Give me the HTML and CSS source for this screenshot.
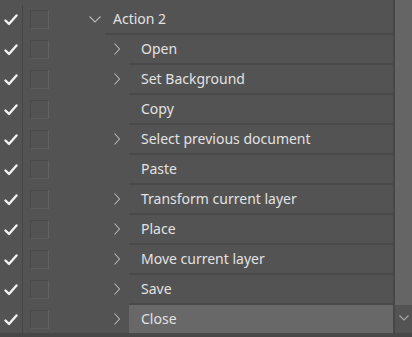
FILE: index.html
```html
<!DOCTYPE html>
<html lang="en">
<head>
  <meta charset="UTF-8">
  <meta name="viewport" content="width=device-width, initial-scale=1.0">
  <title>Actions</title>
  <link rel="stylesheet" href="styles.css">
</head>
<body>
  <div class="panel">
    <div class="list">

      <div class="row">
        <div class="check"><svg viewBox="0 0 14 12" width="14" height="12"><polyline points="1.5,6.5 5,10 12.5,1.5" /></svg></div>
        <div class="vis"><span class="box"></span></div>
        <div class="item action">
          <span class="twisty"><svg viewBox="0 0 12 7" width="12" height="7"><polyline points="0.5,0.5 6,6 11.5,0.5" /></svg></span>
          <span class="label">Action 2</span>
        </div>
      </div>

      <div class="row">
        <div class="check"><svg viewBox="0 0 14 12" width="14" height="12"><polyline points="1.5,6.5 5,10 12.5,1.5" /></svg></div>
        <div class="vis"><span class="box"></span></div>
        <div class="item step">
          <span class="twisty"><svg viewBox="0 0 6 12" width="6" height="12"><polyline points="0.5,0.5 5.5,6 0.5,11.5" /></svg></span>
          <span class="label">Open</span>
        </div>
      </div>

      <div class="row">
        <div class="check"><svg viewBox="0 0 14 12" width="14" height="12"><polyline points="1.5,6.5 5,10 12.5,1.5" /></svg></div>
        <div class="vis"><span class="box"></span></div>
        <div class="item step">
          <span class="twisty"><svg viewBox="0 0 6 12" width="6" height="12"><polyline points="0.5,0.5 5.5,6 0.5,11.5" /></svg></span>
          <span class="label">Set Background</span>
        </div>
      </div>

      <div class="row">
        <div class="check"><svg viewBox="0 0 14 12" width="14" height="12"><polyline points="1.5,6.5 5,10 12.5,1.5" /></svg></div>
        <div class="vis"><span class="box"></span></div>
        <div class="item step">
          <span class="twisty"></span>
          <span class="label">Copy</span>
        </div>
      </div>

      <div class="row">
        <div class="check"><svg viewBox="0 0 14 12" width="14" height="12"><polyline points="1.5,6.5 5,10 12.5,1.5" /></svg></div>
        <div class="vis"><span class="box"></span></div>
        <div class="item step">
          <span class="twisty"><svg viewBox="0 0 6 12" width="6" height="12"><polyline points="0.5,0.5 5.5,6 0.5,11.5" /></svg></span>
          <span class="label">Select previous document</span>
        </div>
      </div>

      <div class="row">
        <div class="check"><svg viewBox="0 0 14 12" width="14" height="12"><polyline points="1.5,6.5 5,10 12.5,1.5" /></svg></div>
        <div class="vis"><span class="box"></span></div>
        <div class="item step">
          <span class="twisty"></span>
          <span class="label">Paste</span>
        </div>
      </div>

      <div class="row">
        <div class="check"><svg viewBox="0 0 14 12" width="14" height="12"><polyline points="1.5,6.5 5,10 12.5,1.5" /></svg></div>
        <div class="vis"><span class="box"></span></div>
        <div class="item step">
          <span class="twisty"><svg viewBox="0 0 6 12" width="6" height="12"><polyline points="0.5,0.5 5.5,6 0.5,11.5" /></svg></span>
          <span class="label">Transform current layer</span>
        </div>
      </div>

      <div class="row">
        <div class="check"><svg viewBox="0 0 14 12" width="14" height="12"><polyline points="1.5,6.5 5,10 12.5,1.5" /></svg></div>
        <div class="vis"><span class="box"></span></div>
        <div class="item step">
          <span class="twisty"><svg viewBox="0 0 6 12" width="6" height="12"><polyline points="0.5,0.5 5.5,6 0.5,11.5" /></svg></span>
          <span class="label">Place</span>
        </div>
      </div>

      <div class="row">
        <div class="check"><svg viewBox="0 0 14 12" width="14" height="12"><polyline points="1.5,6.5 5,10 12.5,1.5" /></svg></div>
        <div class="vis"><span class="box"></span></div>
        <div class="item step">
          <span class="twisty"><svg viewBox="0 0 6 12" width="6" height="12"><polyline points="0.5,0.5 5.5,6 0.5,11.5" /></svg></span>
          <span class="label">Move current layer</span>
        </div>
      </div>

      <div class="row">
        <div class="check"><svg viewBox="0 0 14 12" width="14" height="12"><polyline points="1.5,6.5 5,10 12.5,1.5" /></svg></div>
        <div class="vis"><span class="box"></span></div>
        <div class="item step">
          <span class="twisty"><svg viewBox="0 0 6 12" width="6" height="12"><polyline points="0.5,0.5 5.5,6 0.5,11.5" /></svg></span>
          <span class="label">Save</span>
        </div>
      </div>

      <div class="row">
        <div class="check"><svg viewBox="0 0 14 12" width="14" height="12"><polyline points="1.5,6.5 5,10 12.5,1.5" /></svg></div>
        <div class="vis"><span class="box"></span></div>
        <div class="item step selected">
          <span class="twisty"><svg viewBox="0 0 6 12" width="6" height="12"><polyline points="0.5,0.5 5.5,6 0.5,11.5" /></svg></span>
          <span class="label">Close</span>
        </div>
      </div>

    </div>

    <div class="scrollbar">
      <div class="thumb"></div>
      <div class="arrow"><svg viewBox="0 0 10 6" width="10" height="6"><polyline points="0.5,0.5 5,5 9.5,0.5" /></svg></div>
    </div>
  </div>
</body>
</html>
```
FILE: styles.css
```css
body {
  margin: 0;
  background-color: #535353;
  font-family: "Noto Sans", "Open Sans", Arial, sans-serif;
  font-size: 14px;
  color: #e2e2e2;
  overflow: hidden;
}

.panel {
  display: flex;
  height: 337px;
  border-bottom: 4px solid #474747;
  box-sizing: border-box;
}

.list {
  flex: 1;
  padding-top: 5px;
}

.row {
  display: flex;
  height: 30px;
}

.check {
  width: 22px;
  border-right: 1px solid #464646;
  display: flex;
  align-items: center;
  justify-content: center;
}

.check svg polyline {
  fill: none;
  stroke: #f2f2f2;
  stroke-width: 2.4;
  stroke-linecap: round;
  stroke-linejoin: round;
}

.vis {
  width: 42px;
  padding-left: 7px;
  padding-top: 5px;
  box-sizing: border-box;
}

.box {
  display: block;
  width: 17px;
  height: 17px;
  border: 1px solid #4a4a4a;
  border-right-color: #626262;
  border-bottom-color: #5c5c5c;
}

.item {
  flex: 1;
  display: flex;
}

.twisty {
  display: flex;
  align-items: center;
  height: 28px;
}

.twisty svg polyline {
  fill: none;
  stroke: #b8b8b8;
  stroke-width: 1.1;
}

.action .twisty {
  width: 40px;
  padding-left: 24px;
  box-sizing: border-box;
}

.step .twisty {
  width: 64px;
  padding-left: 49px;
  box-sizing: border-box;
}

.label {
  flex: 1;
  height: 28px;
  line-height: 27px;
  border-bottom: 2px solid #4a4a4a;
  white-space: nowrap;
}

.action .label {
  padding-left: 8px;
}

.step .label {
  padding-left: 12px;
}

.selected .label {
  background-color: #686868;
}

.scrollbar {
  width: 17px;
  border-left: 2px solid #474747;
  display: flex;
  flex-direction: column;
}

.thumb {
  height: 305px;
  background-color: #656565;
}

.arrow {
  flex: 1;
  display: flex;
  justify-content: center;
  padding-top: 10px;
}

.arrow svg polyline {
  fill: none;
  stroke: #a8a8a8;
  stroke-width: 1.1;
}
```
